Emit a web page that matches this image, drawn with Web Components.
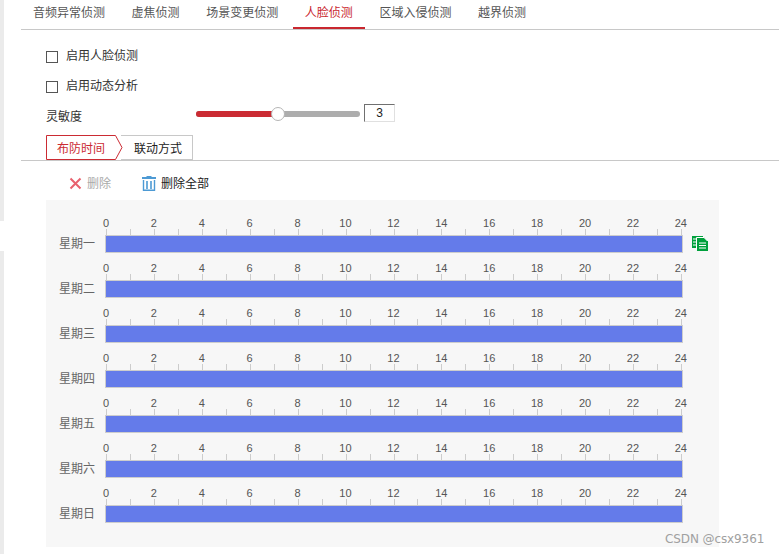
<!DOCTYPE html>
<html>
<head>
<meta charset="utf-8">
<style>
  html, body { margin: 0; height: 100%; background: #fff; overflow: hidden; }
  body { font: 12px "Noto Sans CJK SC", "Liberation Sans", sans-serif; color: #333; }
</style>
</head>
<body>
<config-page>
  <detect-tabs></detect-tabs>
  <check-row label="启用人脸侦测"></check-row>
  <check-row label="启用动态分析"></check-row>
  <sensitivity-slider value="3"></sensitivity-slider>
  <step-tabs></step-tabs>
  <schedule-toolbar></schedule-toolbar>
  <schedule-chart></schedule-chart>
</config-page>
<script>
class ConfigPage extends HTMLElement {
  constructor() {
    super();
    this.attachShadow({ mode: 'open' }).innerHTML = `
      <style>
        :host { display: block; position: relative; height: 554px; padding-left: 21px; box-sizing: border-box; overflow: hidden; }
        .strip { position: absolute; left: 0; width: 4px; background: #ebebeb; }
        .watermark { position: absolute; left: 665px; top: 532px; font: 12px "DejaVu Sans", sans-serif; letter-spacing: -0.1px; color: #a0a0a0; white-space: nowrap; }
      </style>
      <div class="strip" style="top:0;height:221px"></div>
      <div class="strip" style="top:251px;bottom:0"></div>
      <slot></slot>
      <div class="watermark">CSDN @csx9361</div>`;
  }
}

class DetectTabs extends HTMLElement {
  constructor() {
    super();
    const names = ["音频异常侦测", "虚焦侦测", "场景变更侦测", "人脸侦测", "区域入侵侦测", "越界侦测"];
    this.attachShadow({ mode: 'open' }).innerHTML = `
      <style>
        :host { display: flex; height: 30px; box-sizing: border-box; border-bottom: 1px solid #c8c8c8; padding-left: 12px; gap: 26.6px; }
        .tab { height: 29px; line-height: 23px; color: #555; white-space: nowrap; box-sizing: border-box; }
        .on { color: #c9272f; border-bottom: 2px solid #c9272f; padding: 0 12px; margin: 0 -12px; }
      </style>
      ${names.map(n => `<div class="tab ${n == "人脸侦测" ? "on" : ""}">${n}</div>`).join("")}`;
  }
}

class CheckRow extends HTMLElement {
  constructor() {
    super();
    this.attachShadow({ mode: 'open' }).innerHTML = `
      <style>
        :host { display: flex; align-items: center; height: 30px; margin-left: 25px; gap: 8px; color: #333; }
        :host(:first-of-type) { margin-top: 10px; }
        .box { width: 10px; height: 10px; margin-top: 3px; border: 1px solid #555; background: #fff; }
        span { margin-bottom: 1px; }
      </style>
      <div class="box"></div><span>${this.getAttribute("label")}</span>`;
  }
}

class SensitivitySlider extends HTMLElement {
  constructor() {
    super();
    this.attachShadow({ mode: 'open' }).innerHTML = `
      <style>
        :host { display: flex; align-items: center; height: 28px; margin-left: 25px; }
        .name { width: 150px; margin-top: 2px; }
        .track { position: relative; width: 164px; height: 6px; border-radius: 3px; background: #adadad; }
        .fill { width: 76px; height: 100%; border-radius: 3px 0 0 3px; background: #cb2b33; }
        .knob { position: absolute; left: 75px; top: -4px; width: 12px; height: 12px; border: 1px solid #b5b5b5; border-radius: 50%; background: #fff; }
        .num { width: 29px; height: 16px; margin-left: 4px; margin-bottom: 3px; border: 1px solid #e0e0e0; border-top-color: #707070; border-left-color: #707070; text-align: center; line-height: 16px; color: #222; font-family: "Liberation Sans", sans-serif; }
      </style>
      <div class="name">灵敏度</div>
      <div class="track"><div class="fill"></div><div class="knob"></div></div>
      <div class="num">${this.getAttribute("value")}</div>`;
  }
}

class StepTabs extends HTMLElement {
  constructor() {
    super();
    this.attachShadow({ mode: 'open' }).innerHTML = `
      <style>
        :host { display: flex; height: 26px; box-sizing: border-box; margin-top: 7px; padding-left: 25px; border-bottom: 1px solid #c8c8c8; position: relative; }
        .first { position: relative; width: 71px; height: 25px; line-height: 25px; color: #cb2b33; }
        .first svg { position: absolute; left: 0; top: 0; }
        .first span { position: relative; margin-left: 11px; }
        .second { width: 72px; height: 25px; box-sizing: border-box; margin-left: 4px; padding-left: 13px; border: 1px solid #c8c8c8; border-left: 0; line-height: 23px; color: #222; }
      </style>
      <div class="first">
        <svg width="77" height="25" viewBox="0 0 77 25" fill="none"><path d="M.5 .5H69.500L76 12.500 69.500 24.500H.5Z" fill="#fff" stroke="#cb2b33"/></svg>
        <span>布防时间</span>
      </div>
      <div class="second">联动方式</div>`;
  }
}

class ScheduleToolbar extends HTMLElement {
  constructor() {
    super();
    this.attachShadow({ mode: 'open' }).innerHTML = `
      <style>
        :host { display: flex; align-items: center; height: 39px; box-sizing: border-box; padding-top: 3px; margin-left: 48px; color: #222; }
        svg { display: block; flex: none; }
        .x { margin-top: 2px; }
        .bin { margin-top: 3px; }
        .off { color: #aaa; margin-left: 5px; width: 55px; }
        .all { margin-left: 5px; }
      </style>
      <svg class="x" width="13" height="13" viewBox="0 0 13 13"><path d="M1.500 1.500L11.500 11.500M11.500 1.500L1.500 11.500" stroke="#e8626f" stroke-width="2"/></svg>
      <span class="off">删除</span>
      <svg class="bin" width="14" height="15" viewBox="0 0 14 15" fill="none" stroke="#4d9ad4"><path d="M0 2H14" stroke-width="2"/><path d="M4.500 .5H9.500"/><path d="M1.500 4V14.300H12.500V4" stroke-width="1.400"/><path d="M5 5V13M9 5V13" stroke-width="1.600"/></svg>
      <span class="all">删除全部</span>`;
  }
}

class ScheduleRow extends HTMLElement {
  constructor() {
    super();
    const hours = [];
    for (let h = 0; h <= 24; h += 2) hours.push(`<span>${h}</span>`);
    const copy = this.hasAttribute("copy") ? `
      <svg class="copy" width="16" height="15" viewBox="0 0 16 15">
        <path d="M0 0H11V12H0Z" fill="#00a03c"/>
        <path d="M1 3H4M1 6H4M1 9H4" stroke="#fff"/>
        <path d="M4.500 1.500H12L15.500 5V14.500H4.500Z" fill="#00a03c" stroke="#fff"/>
        <path d="M5 14H16V15H5ZM15 5H16V15H15Z" fill="#00a03c"/>
        <path d="M7 7H14M7 9.500H14M7 12H14" stroke="#fff"/>
      </svg>` : "";
    this.attachShadow({ mode: 'open' }).innerHTML = `
      <style>
        :host { display: flex; height: 45px; }
        .day { width: 59px; padding-top: 20px; box-sizing: border-box; color: #666; text-align: right; padding-right: 10px; white-space: nowrap; flex: none; line-height: 18px; }
        .scale { position: relative; width: 578px; flex: none; }
        .labels { display: flex; height: 13px; margin-left: -23px; padding-top: 2px; font: 11px/15px "Liberation Sans", sans-serif; color: #555; }
        .labels span { width: 47.92px; text-align: center; flex: none; }
        .ticks { height: 6px; margin: 0 0 0 1px; width: 576px; background: repeating-linear-gradient(to right, #ccc 0, #ccc 1px, transparent 1px, transparent 23.96px); }
        .bar { height: 16px; background: #647bea; border: 1px solid #cdcdcd; }
        .copy { position: absolute; left: 587px; top: 22px; }
      </style>
      <div class="day">${this.getAttribute("day")}</div>
      <div class="scale">
        <div class="labels">${hours.join("")}</div>
        <div class="ticks"></div>
        <div class="bar"></div>
        ${copy}
      </div>`;
  }
}

class ScheduleChart extends HTMLElement {
  constructor() {
    super();
    const days = ["星期一", "星期二", "星期三", "星期四", "星期五", "星期六", "星期日"];
    this.attachShadow({ mode: 'open' }).innerHTML = `
      <style>
        :host { display: block; width: 673px; height: 347px; margin-left: 25px; padding-top: 14px; box-sizing: border-box; background: #f7f7f7; }
      </style>
      ${days.map((d, i) => `<schedule-row day="${d}" ${i == 0 ? "copy" : ""}></schedule-row>`).join("")}`;
  }
}

customElements.define('config-page', ConfigPage);
customElements.define('detect-tabs', DetectTabs);
customElements.define('check-row', CheckRow);
customElements.define('sensitivity-slider', SensitivitySlider);
customElements.define('step-tabs', StepTabs);
customElements.define('schedule-toolbar', ScheduleToolbar);
customElements.define('schedule-row', ScheduleRow);
customElements.define('schedule-chart', ScheduleChart);
</script>
</body>
</html>
